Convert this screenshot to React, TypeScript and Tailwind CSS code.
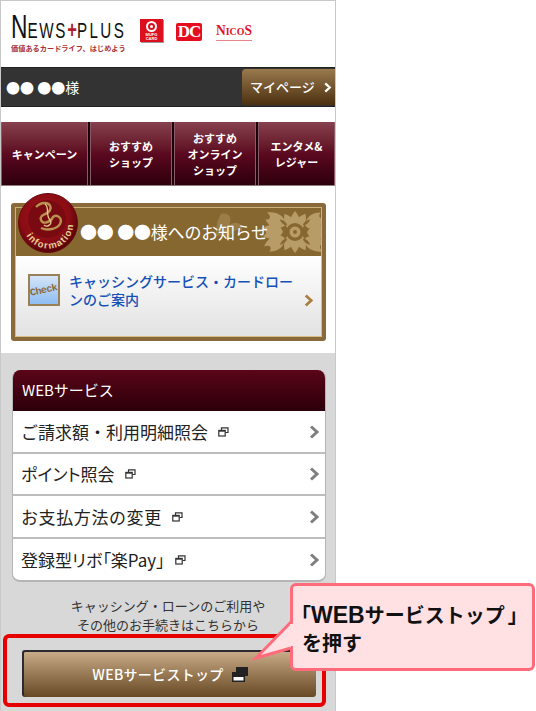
const jp = "font-['Noto_Sans_CJK_JP','Noto_Sans',sans-serif]"

const navItems = [
  { lines: ["キャンペーン"], cls: "w-[87px]" },
  { lines: ["おすすめ", "ショップ"], cls: "w-[82px]" },
  { lines: ["おすすめ", "オンライン", "ショップ"], cls: "w-[82px]" },
  { lines: ["エンタメ&", "レジャー"], cls: "flex-1" },
]

const webRows = [
  { label: "ご請求額・利用明細照会", cls: "h-[43px]" },
  { label: "ポイント照会", cls: "h-[42px] [font-feature-settings:'palt']" },
  { label: "お支払方法の変更", cls: "h-[43px] tracking-[0.6px]" },
  { label: "登録型リボ「楽Pay」", cls: "h-[41px] [font-feature-settings:'palt']" },
]

const Chevron = ({ color = "#7f7f7f", size = 12 }: { color?: string; size?: number }) => (
  <svg width={size} height={size + 2} viewBox="0 0 12 14" className="shrink-0">
    <path d="M3 1.5 L9 7 L3 12.5" fill="none" stroke={color} strokeWidth="3" />
  </svg>
)

const WindowIcon = () => (
  <svg width="11" height="10" viewBox="0 0 11 10" className="shrink-0">
    <path d="M3.5 3 V0.8 H10 V5.5 H7.5" fill="none" stroke="#333" strokeWidth="1.2" />
    <rect x="0.8" y="3.4" width="6.4" height="5.6" fill="none" stroke="#333" strokeWidth="1.2" />
    <rect x="0.8" y="3.2" width="6.4" height="1.5" fill="#333" />
  </svg>
)

const Logo = () => (
  <div className="flex items-start h-[66px] pl-[10px] pt-[12px]">
    <div className="w-[120px]">
      <div className="flex items-baseline h-[28px] leading-[28px] font-['Liberation_Sans',sans-serif] text-[#111] origin-left scale-x-[0.69] whitespace-nowrap">
        <span className="text-[33px]">N</span>
        <span className="text-[22px] tracking-[2.5px]">EWS</span>
        <span className="text-[24px] font-bold text-[#b0202c]">+</span>
        <span className="text-[22px] tracking-[3.5px]">PLUS</span>
      </div>
      <div className={`${jp} mt-[2px] text-[7.2px] leading-[10px] font-bold text-[#a8323c] whitespace-nowrap`}>
        価値あるカードライフ、はじめよう
      </div>
    </div>
    <div className="ml-[9px] mt-[6px] w-[23px] h-[23px] bg-[#dc0f1c] flex flex-col items-center shadow-[1px_1px_0_#999]">
      <div className="mt-[2px] w-[11px] h-[11px] rounded-full border-[2px] border-white flex items-center justify-center">
        <div className="w-[3px] h-[3px] rounded-full bg-white" />
      </div>
      <div className="text-[4px] leading-[4px] mt-[1px] font-bold text-white font-['Liberation_Sans',sans-serif] text-center">MUFG CARD</div>
    </div>
    <div className="ml-[13px] mt-[10px] w-[26px] h-[18px] bg-[#e60e1e] rounded-[2px] flex items-center justify-center">
      <span className="font-['Liberation_Serif',serif] font-bold text-white text-[17px] leading-[18px] tracking-[-1px]">DC</span>
    </div>
    <div className="ml-[14px] mt-[9px] border-b border-[#e8848c]">
      <span className="font-['Liberation_Serif',serif] font-bold text-[#e01228] text-[15px] leading-[17px] block scale-x-90 origin-left w-[36px] whitespace-nowrap">
        N<span className="text-[11px]">ICO</span>S
      </span>
    </div>
  </div>
)

const UserBar = () => (
  <div className={`${jp} flex items-center justify-between h-[40px] bg-[#333] border-y border-[#222] mb-[15px]`}>
    <span className="pl-[5px] text-[14px] text-white whitespace-nowrap">●● ●●様</span>
    <div className="flex items-center justify-between w-[93px] h-[36px] pl-[8px] pr-[3px] rounded-l-[4px] bg-gradient-to-b from-[#9a7a4e] to-[#4c3110] text-white text-[13px] font-medium">
      <span>マイページ</span>
      <Chevron color="#fff" size={9} />
    </div>
  </div>
)

const NavBar = () => (
  <div className={`${jp} flex gap-[2px] h-[64px] bg-[#1a0008] border-b border-[#8a7c7c]`}>
    {navItems.map((item) => (
      <div
        key={item.lines.join("")}
        className={`${item.cls} flex flex-col items-center justify-center border-x border-[#8a5a68] bg-gradient-to-b from-[#87414f] via-[#5c0a20] to-[#2e000c] text-white font-bold text-[11px] leading-[16px] whitespace-nowrap`}
      >
        {item.lines.map((l) => (
          <span key={l}>{l}</span>
        ))}
      </div>
    ))}
  </div>
)

const WaxSeal = () => (
  <svg width="62" height="62" viewBox="0 0 62 62" className="absolute left-[2px] top-[-15px] z-10">
    <defs>
      <radialGradient id="seal" cx="45%" cy="40%" r="60%">
        <stop offset="0%" stopColor="#a3151c" />
        <stop offset="70%" stopColor="#8a0c14" />
        <stop offset="100%" stopColor="#55040a" />
      </radialGradient>
      <path id="sealArc" d="M9.3 43.5 A25 25 0 0 0 56 28" />
    </defs>
    <circle cx="31" cy="31" r="29.5" fill="url(#seal)" stroke="#6a0a10" />
    <circle cx="30" cy="27" r="19" fill="#7a0a12" />
    <path
      d="M19 15 C26 8 36 11 33 18 C31 23 22 22 24 28 C26 33 34 30 36 25 C40 22 46 26 43 32 C40 37 31 39 24 36"
      fill="none"
      stroke="#b8924e"
      strokeWidth="2.4"
    />
    <path d="M28 12 C33 16 28 22 33 28 C36 32 30 36 27 33" fill="none" stroke="#e3c98a" strokeWidth="1.3" />
    <text fontSize="9.5" fontWeight="700" fill="#e8cf96" fontFamily="Liberation Sans, sans-serif" letterSpacing="1.2">
      <textPath href="#sealArc">information</textPath>
    </text>
  </svg>
)

const petal = "M0 0 C6 -5 7 -13 0 -21 C-7 -13 -6 -5 0 0 Z"
const leaf = "M0 -12 C8 -14 10 -24 3 -34 C2 -28 -2 -27 -4 -32 C-9 -24 -7 -16 0 -12 Z"

const Damask = () => (
  <svg width="106" height="48" viewBox="0 0 106 48" className="absolute right-0 top-0">
    <g fill="#b89c68" transform="translate(80 24)">
      {[-60, -120, 60, 120, -90, 90].map((a) => (
        <path key={a} d={leaf} transform={`rotate(${a})`} />
      ))}
      {[-150, -30, 0, 30, 150, 180].map((a) => (
        <path key={a} d={petal} transform={`rotate(${a})`} />
      ))}
      <circle r="9" fill="#86672f" />
      <circle r="5.5" />
      <circle r="2" fill="#86672f" />
    </g>
    <g fill="#86672f" transform="translate(80 24)">
      {[-130, -50, 50, 130].map((a) => (
        <path key={a} d="M0 -10 C2 -13 2 -16 0 -20 C-2 -16 -2 -13 0 -10 Z" transform={`rotate(${a})`} />
      ))}
    </g>
    <g fill="#a08450" opacity="0.75">
      <path d="M6 6 C14 4 18 10 14 17 C22 12 28 16 27 23 C20 20 16 24 14 32 C10 26 4 26 0 30 C2 22 0 16 6 6 Z" />
    </g>
  </svg>
)

const InfoCard = () => (
  <div className="bg-white h-[167px] px-[10px] pt-[17px]">
    <div className={`${jp} relative w-[315px] h-[138px] rounded-[3px] border-[4px] border-[#8a6a3a]`}>
      <WaxSeal />
      <div className="relative flex items-center h-[49px] border-t border-x border-[#cdb27c] bg-[#86672f] pl-[64px] text-white text-[17px] tracking-[-0.2px] whitespace-nowrap overflow-hidden">
        <Damask />
        <span className="relative">●● ●●様へのお知らせ</span>
      </div>
      <div className="flex items-start h-[81px] pl-[12px] pr-[7px] pt-[16px] bg-gradient-to-b from-white to-[#e2e2e2] border-x border-b border-[#d8bd85]">
        <div className="mt-[2px] w-[32px] h-[32px] shrink-0 flex items-center justify-center border-[2px] border-[#9a8058] bg-gradient-to-b from-[#d4e4f8] to-[#8fbcf2]">
          <span className="font-['Liberation_Mono',monospace] font-bold text-[10px] tracking-[-0.5px] text-[#8a6a3a] -rotate-12">Check</span>
        </div>
        <div className="ml-[9px] w-[226px] text-[#1450b8] text-[14px] leading-[18px] font-medium">
          キャッシングサービス・カードロー
          <br />
          ンのご案内
        </div>
        <div className="ml-auto mt-[22px]">
          <Chevron color="#a87f3e" size={11} />
        </div>
      </div>
    </div>
  </div>
)

const WebPanel = () => (
  <div className={`${jp} w-[314px] ml-[11px] mt-[17px] rounded-[8px] overflow-hidden border-b-2 border-x border-[#b5b5b5] bg-white`}>
    <div className="flex items-center h-[41px] pl-[9px] bg-gradient-to-b from-[#5a0618] to-[#2c000a] text-white text-[15px]">WEBサービス</div>
    {webRows.map((row, i) => (
      <div
        key={row.label}
        className={`${row.cls} flex items-center pl-[8px] pr-[5px] text-[#222] text-[17px] whitespace-nowrap ${i < 3 ? "border-b-2 border-[#bdbdbd]" : ""}`}
      >
        <span>{row.label}</span>
        <span className="ml-[10px]">
          <WindowIcon />
        </span>
        <span className="ml-auto">
          <Chevron />
        </span>
      </div>
    ))}
  </div>
)

const WebTop = () => (
  <div className={`${jp} flex flex-col items-center`}>
    <p className="mt-[14px] text-center text-[13px] leading-[19px] text-[#333] whitespace-nowrap">
      キャッシング・ローンのご利用や
      <br />
      その他のお手続きはこちらから
    </p>
    <div className="mt-[16px] ml-[2px] w-[294px] h-[47px] flex items-center justify-center gap-[8px] rounded-[3px] border-t-2 border-l-2 border-[#2a2a30] bg-gradient-to-b from-[#c9ab87] to-[#674a24] text-white text-[14px] font-medium tracking-[0.3px]">
      <span>WEBサービストップ</span>
      <svg width="16" height="15" viewBox="0 0 16 15">
        <rect x="4" y="0" width="12" height="9" fill="#222" />
        <rect x="0" y="5" width="13" height="10" fill="#222" />
        <rect x="1.5" y="10" width="10" height="3.5" fill="#fff" />
      </svg>
    </div>
  </div>
)

const Callout = () => (
  <>
    <div className="absolute left-[3px] top-[634px] w-[323px] h-[73px] rounded-[6px] border-[4px] border-[#e60000]" />
    <div className={`${jp} absolute left-[290px] top-[583px] w-[245px] h-[88px] rounded-[6px] border-[3px] border-[#ff6b7a] bg-[#ffe1e4] pl-[9px] pt-[15px] text-[20px] leading-[28px] font-bold text-[#111] whitespace-nowrap`}>
      <div className="-ml-[11px] h-[28px]">
        「<span className="font-['Liberation_Sans',sans-serif] text-[23px]">WEB</span>サービストップ<span className="ml-[3px]">」</span>
      </div>
      <div>を押す</div>
    </div>
    <svg width="42" height="44" viewBox="0 0 42 44" className="absolute left-[252px] top-[618px]">
      <path d="M39 4 L4 40 L39 30" fill="#ffe1e4" stroke="#ff6b7a" strokeWidth="3" />
      <path d="M40 6 V28" stroke="#ffe1e4" strokeWidth="4" />
    </svg>
  </>
)

const App = () => {
  return (
    <div className="relative w-[536px] h-[711px] overflow-hidden bg-white">
      <div className="w-[336px] h-[711px] border-x border-t border-[#c9c9c9] bg-[#d8d8d8]">
        <div className="bg-white">
          <Logo />
          <UserBar />
          <NavBar />
        </div>
        <InfoCard />
        <WebPanel />
        <WebTop />
      </div>
      <Callout />
    </div>
  )
}

export default App
